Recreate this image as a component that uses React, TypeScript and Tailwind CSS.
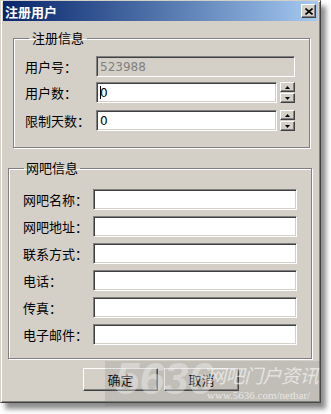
import React from "react";

const CJK = { fontFamily: '"Noto Sans CJK SC", "Liberation Sans", sans-serif' };

function SunkenInput({ children, disabled, className = "" }: { children?: React.ReactNode; disabled?: boolean; className?: string }) {
  return (
    <div
      className={`h-[21px] border border-t-[#808080] border-l-[#808080] border-r-[#ffffff] border-b-[#ffffff] shadow-[inset_1px_1px_0_#404040,inset_-1px_-1px_0_#d4d0c8] flex items-center pl-[3px] text-[12px] ${disabled ? "bg-[#d4d0c8] text-[#808080]" : "bg-white text-black"} ${className}`}
      style={{ fontFamily: '"DejaVu Sans", "Liberation Sans", sans-serif' }}
    >
      {children}
    </div>
  );
}

function SpinBtn({ up }: { up?: boolean }) {
  return (
    <div className="w-[15px] h-[10px] bg-[#d4d0c8] border border-t-[#ffffff] border-l-[#ffffff] border-r-[#404040] border-b-[#404040] shadow-[inset_-1px_-1px_0_#808080] flex items-center justify-center">
      <svg width="5" height="3" viewBox="0 0 5 3">
        {up ? <path d="M2.5 0 L5 3 L0 3 Z" fill="#000" /> : <path d="M0 0 L5 0 L2.5 3 Z" fill="#000" />}
      </svg>
    </div>
  );
}

function Spinner() {
  return (
    <div className="flex flex-col gap-[1px] ml-[3px]">
      <SpinBtn up />
      <SpinBtn />
    </div>
  );
}

function Label({ children, w }: { children: React.ReactNode; w: string }) {
  return (
    <div className={`${w} shrink-0 text-[13px] text-black leading-none`} style={CJK}>
      {children}
    </div>
  );
}

function Button({ children }: { children: React.ReactNode }) {
  return (
    <div
      className="w-[75px] h-[23px] bg-[#d4d0c8] border border-t-[#ffffff] border-l-[#ffffff] border-r-[#404040] border-b-[#404040] shadow-[inset_-1px_-1px_0_#808080] flex items-center justify-center text-[13px] text-black"
      style={CJK}
    >
      {children}
    </div>
  );
}

export default function App() {
  return (
    <div className="w-[331px] h-[414px] bg-white relative overflow-hidden">
      <div className="w-[321px] h-[403px] bg-[#d4d0c8] border border-t-[#d4d0c8] border-l-[#d4d0c8] border-r-[#404040] border-b-[#404040] shadow-[inset_1px_1px_0_#ffffff,inset_-1px_-1px_0_#808080,5px_6px_5px_rgba(0,0,0,0.45)] px-[2px] flex flex-col">
        {/* Title bar */}
        <div className="h-[20px] bg-gradient-to-r from-[#0a246a] to-[#a6caf0] flex items-center justify-between pl-[2px] pr-[2px]">
          <span className="text-white font-bold text-[13px] leading-none" style={CJK}>
            注册用户
          </span>
          <div className="w-[15px] h-[14px] bg-[#d4d0c8] border border-t-[#ffffff] border-l-[#ffffff] border-r-[#404040] border-b-[#404040] shadow-[inset_-1px_-1px_0_#808080] flex items-center justify-center">
            <svg width="8" height="7" viewBox="0 0 8 7">
              <path d="M0.5 0.5 L7.5 6.5 M7.5 0.5 L0.5 6.5" stroke="#000" strokeWidth="1.6" />
            </svg>
          </div>
        </div>

        {/* Group 1 */}
        <fieldset className="ml-[10px] mr-[8px] mt-[9px] h-[118px] border border-[#808080] shadow-[1px_1px_0_#ffffff,inset_1px_1px_0_#ffffff] px-[11px] pt-[10px]">
          <legend className="px-[3px] ml-[4px] text-[13px] text-black leading-[16px]" style={CJK}>
            注册信息
          </legend>
          <div className="flex flex-col gap-[5px]">
            <div className="flex items-center">
              <Label w="w-[71px]">用户号：</Label>
              <SunkenInput disabled className="w-[199px]">523988</SunkenInput>
            </div>
            <div className="flex items-center">
              <Label w="w-[71px]">用户数：</Label>
              <SunkenInput className="w-[181px]">
                <span className="w-[1px] h-[13px] bg-black -mr-[1px]" />
                0
              </SunkenInput>
              <Spinner />
            </div>
            <div className="flex items-center mt-[2px]">
              <Label w="w-[71px]">限制天数：</Label>
              <SunkenInput className="w-[181px]">0</SunkenInput>
              <Spinner />
            </div>
          </div>
        </fieldset>

        {/* Group 2 */}
        <fieldset className="ml-[5px] mr-[6px] mt-[12px] h-[199px] border border-[#808080] shadow-[1px_1px_0_#ffffff,inset_1px_1px_0_#ffffff] px-[14px] pt-[13px]">
          <legend className="px-[2px] ml-[1px] text-[13px] text-black leading-[16px]" style={CJK}>
            网吧信息
          </legend>
          <div className="flex flex-col gap-[6px]">
            {["网吧名称：", "网吧地址：", "联系方式：", "电话：", "传真：", "电子部件：".replace("部", "邮")].map((l) => (
              <div key={l} className="flex items-center">
                <Label w="w-[70px]">{l}</Label>
                <SunkenInput className="w-[204px]" />
              </div>
            ))}
          </div>
        </fieldset>

        {/* Buttons */}
        <div className="flex gap-[6px] ml-[80px] mt-[9px]">
          <Button>确定</Button>
          <Button>取消</Button>
        </div>
      </div>

      {/* Watermark overlay */}
      <div className="absolute left-[105px] top-[361px] w-[216px] h-[45px] bg-[rgba(110,110,110,0.18)] pointer-events-none">
        <div
          className="absolute left-[10px] top-[-4px] text-[44px] font-bold italic text-[rgba(255,255,255,0.35)] leading-none"
          style={{ fontFamily: '"Liberation Sans", sans-serif' }}
        >
          5636
        </div>
        <div className="absolute left-[102px] top-[4px] text-[19px] italic text-[rgba(255,255,255,0.6)] leading-none tracking-[-0.5px]" style={CJK}>
          网吧门户资讯
        </div>
        <div
          className="absolute left-[102px] top-[29px] text-[11px] text-[rgba(255,255,255,0.65)] leading-none"
          style={{ fontFamily: '"Liberation Serif", serif' }}
        >
          www.5636.com/netbar/
        </div>
      </div>
    </div>
  );
}
